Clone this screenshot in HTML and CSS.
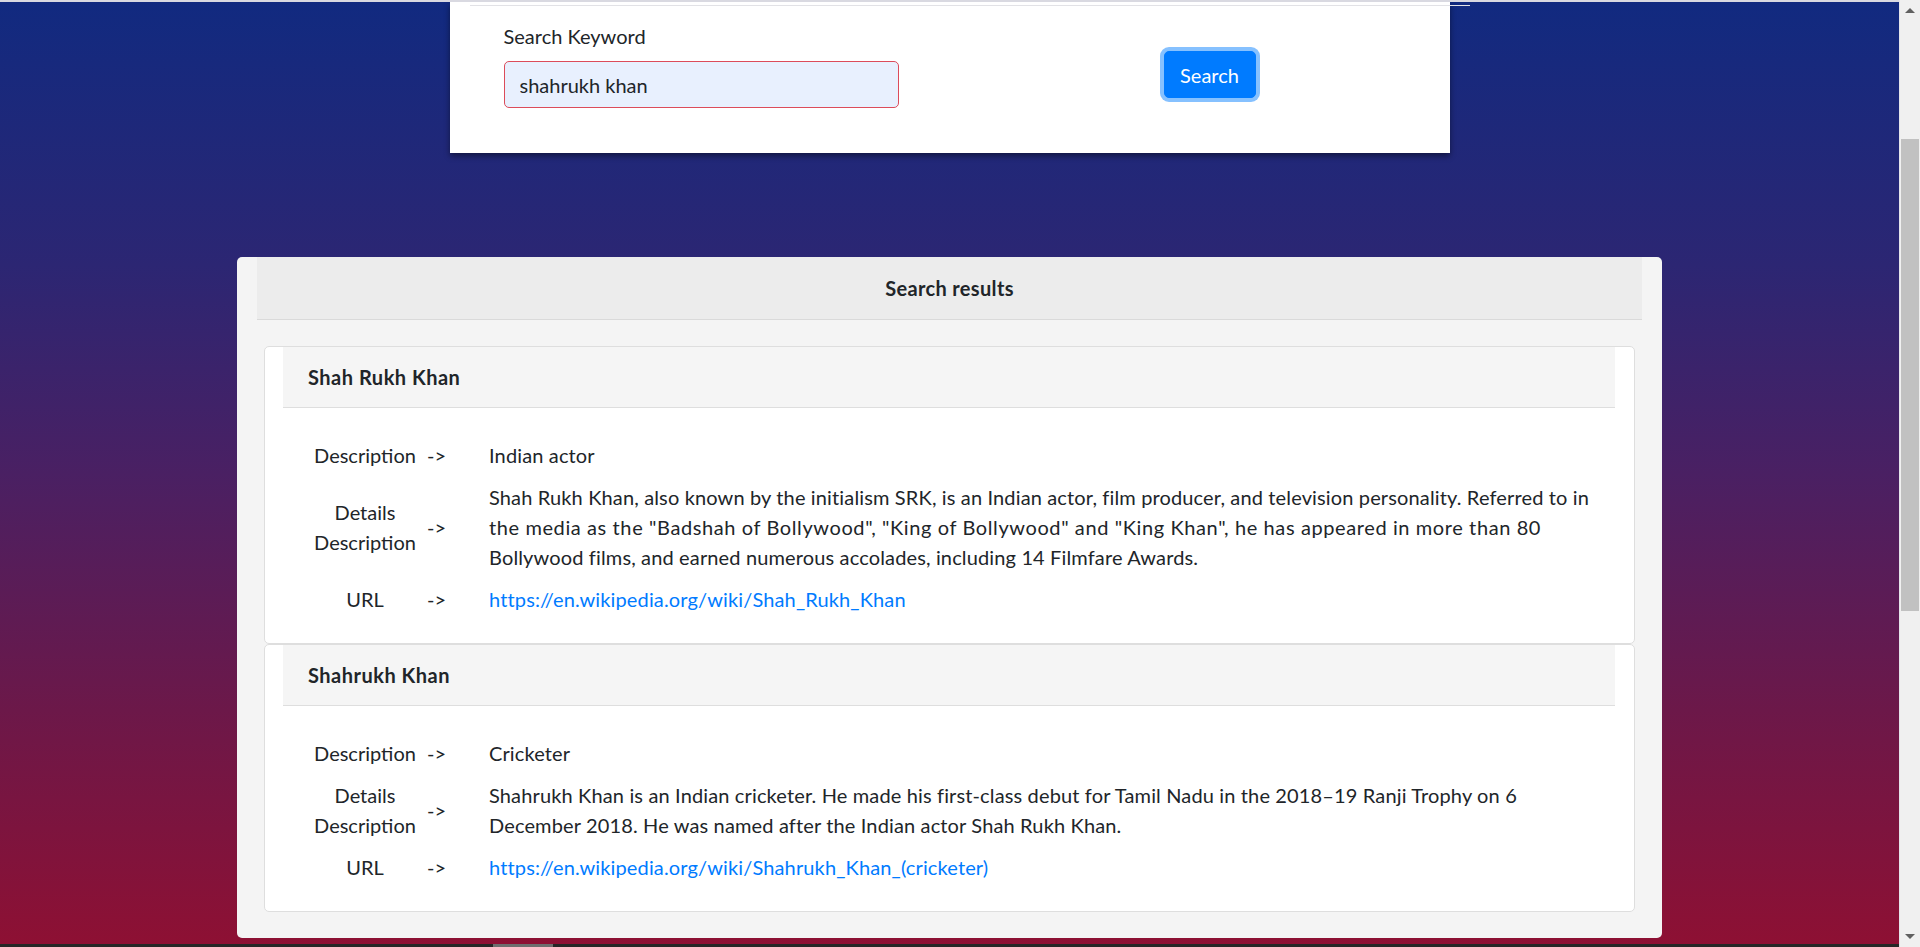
FILE: index.html
```html
<!DOCTYPE html>
<html lang="en">
<head>
<meta charset="utf-8">
<title>Search</title>
<link rel="stylesheet" href="styles.css">
</head>
<body>
<div class="page">
  <div class="topstrip"></div>
  <div class="viewport">
    <div class="search-card">
      <div class="field">
        <label class="field-label" for="kw">Search Keyword</label>
        <input id="kw" class="field-input" type="text" value="shahrukh khan">
      </div>
      <button class="btn-search" type="button">Search</button>
    </div>

    <div class="results">
      <div class="results-header">Search results</div>
      <div class="result-list">
        <div class="result-card">
          <div class="result-head">Shah Rukh Khan</div>
          <div class="result-body">
            <div class="r-label">Description</div>
            <div class="r-arrow">-&gt;</div>
            <div class="r-value">Indian actor</div>

            <div class="r-label">Details<br>Description</div>
            <div class="r-arrow">-&gt;</div>
            <div class="r-value">Shah Rukh Khan, also known by the initialism SRK, is an Indian actor, film producer, and television personality. Referred to in <span class="wide">the media as the "Badshah of Bollywood", "King of Bollywood" and "King Khan", he has appeared in more than 80</span><br>Bollywood films, and earned numerous accolades, including 14 Filmfare Awards.</div>

            <div class="r-label">URL</div>
            <div class="r-arrow">-&gt;</div>
            <div class="r-value"><a class="r-link" href="#">https://en.wikipedia.org/wiki/Shah_Rukh_Khan</a></div>
          </div>
        </div>

        <div class="result-card">
          <div class="result-head">Shahrukh Khan</div>
          <div class="result-body">
            <div class="r-label">Description</div>
            <div class="r-arrow">-&gt;</div>
            <div class="r-value">Cricketer</div>

            <div class="r-label">Details<br>Description</div>
            <div class="r-arrow">-&gt;</div>
            <div class="r-value">Shahrukh Khan is an Indian cricketer. He made his first-class debut for Tamil Nadu in the 2018–19 Ranji Trophy on 6 December 2018. He was named after the Indian actor Shah Rukh Khan.</div>

            <div class="r-label">URL</div>
            <div class="r-arrow">-&gt;</div>
            <div class="r-value"><a class="r-link" href="#">https://en.wikipedia.org/wiki/Shahrukh_Khan_(cricketer)</a></div>
          </div>
        </div>
      </div>
    </div>
  </div>
  <div class="hbar"><div class="hbar-thumb"></div></div>
</div>
<div class="scrollbar">
  <div class="sb-btn"><span class="tri-up"></span></div>
  <div class="sb-track"><div class="sb-thumb"></div></div>
  <div class="sb-btn"><span class="tri-down"></span></div>
</div>
</body>
</html>
```

FILE: styles.css
```css
* { box-sizing: border-box; }

html, body {
  margin: 0;
  padding: 0;
  height: 947px;
  overflow: hidden;
}

body {
  display: flex;
  font-family: Lato, "Open Sans", sans-serif;
  font-size: 20px;
  line-height: 30px;
  color: #212529;
}

.page {
  flex: 1;
  display: flex;
  flex-direction: column;
  background: linear-gradient(180deg, #112a80 0%, #2c2673 28%, #4a2063 50%, #6c1849 75%, #8e1033 100%);
  min-width: 0;
}

.topstrip {
  height: 2px;
  background: #d9d9e1;
  flex: none;
}

.viewport {
  flex: 1;
  overflow: hidden;
}

/* search card */
.search-card {
  position: relative;
  width: 1000px;
  margin: 0 auto;
  background: #fff;
  box-shadow: 0 3px 6px rgba(0, 0, 0, 0.45);
  padding: 19px 0 45px 54px;
  display: flex;
  align-items: flex-start;
}

.search-card::after {
  content: "";
  position: absolute;
  top: 3px;
  left: 20px;
  width: 1000px;
  height: 1px;
  background: #e2e2e6;
}

.field {
  width: 395px;
  display: flex;
  flex-direction: column;
}

.field-label {
  display: block;
  line-height: 30px;
  margin-bottom: 10px;
}

.field-input {
  height: 47px;
  width: 395px;
  border: 1px solid #dc4c5a;
  border-radius: 5px;
  background: #e8f0fe;
  padding: 0 15px;
  font-family: inherit;
  font-size: 20px;
  color: #212529;
  outline: none;
}

.btn-search {
  margin-left: 265px;
  margin-top: 30px;
  height: 47px;
  width: 92px;
  padding: 0;
  border: 1px solid #007bff;
  border-radius: 5px;
  background: #007bff;
  color: #fff;
  font-family: inherit;
  font-size: 20px;
  line-height: 47px;
  box-shadow: 0 0 0 4px #86c1ff;
}

/* results */
.results {
  width: 1425px;
  margin: 104px auto 0;
  background: #f4f4f4;
  border-radius: 5px;
  padding: 0 20px 26px;
}

.results-header {
  background: #ececec;
  border-bottom: 1px solid #dadada;
  padding: 16px 15px;
  text-align: center;
  font-weight: 700;
  letter-spacing: 0.35px;
}

.result-list {
  padding: 26px 7px 0;
}

.result-card {
  background: #fff;
  border: 1px solid #dedede;
  border-radius: 5px;
  padding: 0 19px 0 18px;
}

.result-head {
  background: #f5f5f5;
  border-bottom: 1px solid #dedede;
  padding: 15px 25px;
  font-weight: 700;
  letter-spacing: 0.5px;
}

.result-body {
  display: grid;
  grid-template-columns: 120px 64px 1fr;
  row-gap: 12px;
  align-items: center;
  padding: 32px 21px 29px 22px;
}

.r-label {
  text-align: center;
}

.r-arrow {
  padding-left: 2px;
}

.r-value {
  letter-spacing: 0.14px;
}

.wide {
  letter-spacing: 0.6px;
}

.r-link {
  color: #007bff;
  text-decoration: none;
}

/* bottom strip */
.hbar {
  height: 3px;
  flex: none;
  background: #262626;
}

.hbar-thumb {
  margin-left: 493px;
  width: 60px;
  height: 3px;
  background: #6e6e6e;
}

/* fake vertical scrollbar */
.scrollbar {
  width: 21px;
  flex: none;
  background: #f0f0f0;
  border-left: 1px solid #e4e4ea;
  display: flex;
  flex-direction: column;
}

.sb-btn {
  height: 21px;
  flex: none;
  display: flex;
  align-items: center;
  justify-content: center;
}

.tri-up {
  width: 0;
  height: 0;
  border-left: 5px solid transparent;
  border-right: 5px solid transparent;
  border-bottom: 5px solid #606060;
}

.tri-down {
  width: 0;
  height: 0;
  border-left: 5px solid transparent;
  border-right: 5px solid transparent;
  border-top: 5px solid #606060;
}

.sb-track {
  flex: 1;
  padding: 0 1px 0 1px;
}

.sb-thumb {
  margin-top: 118px;
  height: 472px;
  background: #c1c1c1;
}
```
